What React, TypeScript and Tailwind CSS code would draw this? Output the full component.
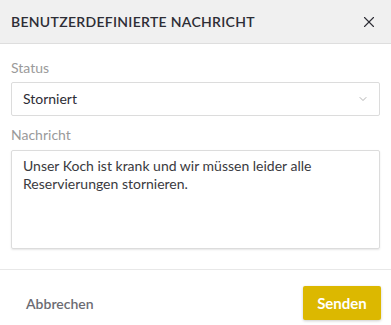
import { X, ChevronDown } from "lucide-react";

export default function App() {
  return (
    <div className="w-[391px] h-[325px] bg-white overflow-hidden font-['Lato',sans-serif]">
      <div className="h-[44px] bg-[#f0f0f0] border-b border-[#dedede] flex items-center justify-between pl-[11px] pr-[13px]">
        <h2 className="text-[14px] font-semibold text-[#2d2d35] tracking-[0.3px]">BENUTZERDEFINIERTE NACHRICHT</h2>
        <X className="w-[18px] h-[18px] text-[#2d2d35]" strokeWidth={1.5} />
      </div>

      <div className="px-[11px] pt-[15px] pb-[20px] border-b border-[#e8e8e8]">
        <label className="block text-[14px] text-[#9a9a9a] leading-[18px]">Status</label>
        <div className="mt-[5px] h-[34px] border border-[#dcdcdc] rounded-[2px] flex items-center justify-between pl-[11px] pr-[10px]">
          <span className="text-[14px] text-[#2d2d35] -mt-[2px]">Storniert</span>
          <ChevronDown className="w-[12px] h-[12px] text-[#9a9a9a]" strokeWidth={1.5} />
        </div>

        <label className="block mt-[10px] text-[14px] text-[#9a9a9a] leading-[18px]">Nachricht</label>
        <textarea
          className="mt-[6px] block w-full h-[99px] resize-none border border-[#dcdcdc] rounded-[2px] shadow-[0_1px_2px_rgba(0,0,0,0.1)] px-[11px] py-[6px] text-[14px] leading-[18px] text-[#3a3a40] outline-none"
          defaultValue="Unser Koch ist krank und wir müssen leider alle Reservierungen stornieren."
        />
      </div>

      <div className="flex items-center justify-between pl-[26px] pr-[10px] pt-[16px]">
        <button className="text-[14px] font-semibold text-[#6b6b72]">Abbrechen</button>
        <button className="w-[78px] h-[34px] bg-[#dcb800] rounded-[2px] shadow-[0_1px_3px_rgba(0,0,0,0.2)] text-white text-[15px] font-bold">
          Senden
        </button>
      </div>
    </div>
  );
}
